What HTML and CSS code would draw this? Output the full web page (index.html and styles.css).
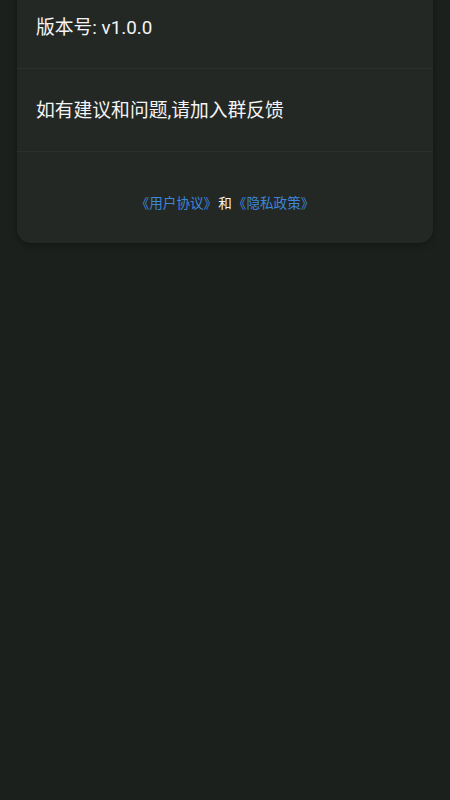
FILE: index.html
```html
<!DOCTYPE html>
<html lang="zh-CN">
<head>
<meta charset="utf-8">
<meta name="viewport" content="width=450">
<title>关于</title>
<link rel="stylesheet" href="styles.css">
</head>
<body>
<div class="page">
  <div class="card">
    <div class="row row-version">版本号: v1.0.0</div>
    <div class="row row-feedback">如有建议和问题,请加入群反馈</div>
    <div class="row row-links">
      <a class="link" href="#">《用户协议》</a><span class="and">和</span><a class="link" href="#">《隐私政策》</a>
    </div>
  </div>
</div>
</body>
</html>
```

FILE: styles.css
```css
html, body {
  margin: 0;
  padding: 0;
  background: #1c201d;
  height: 100%;
}
body {
  font-family: Roboto, "Noto Sans CJK SC", sans-serif;
  color: #f4f4f4;
  overflow: hidden;
}
.page {
  padding: 0 17px;
}
.card {
  margin-top: -15px;
  background: #242825;
  border-radius: 14px;
  box-shadow: 0 2px 6px rgba(0, 0, 0, 0.35);
  display: flex;
  flex-direction: column;
}
.row {
  padding: 0 19px;
  display: flex;
  align-items: center;
  font-size: 18.8px;
  line-height: 24px;
}
.row-version {
  height: 84px;
  padding-top: 2px;
  box-sizing: border-box;
  border-bottom: 1px solid #2c302d;
}
.row-feedback {
  height: 83px;
  box-sizing: border-box;
  border-bottom: 1px solid #2c302d;
  padding-top: 1px;
}
.row-links {
  justify-content: center;
  font-size: 13.6px;
  line-height: 18px;
  padding-top: 42px;
  padding-bottom: 31px;
}
.link {
  color: #3d86d8;
  text-decoration: none;
}
.and {
  color: #f4f4f4;
  margin: 0 1px;
}
```
